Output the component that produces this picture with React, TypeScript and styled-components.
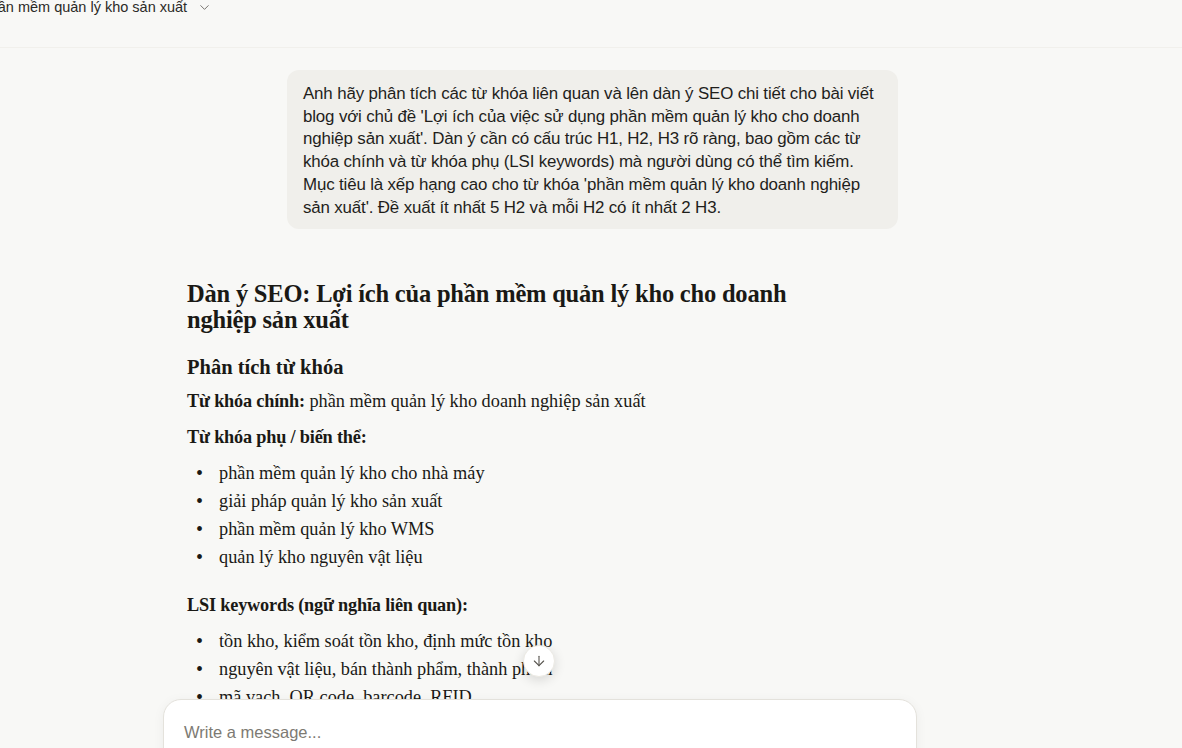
import React, { FC } from 'react';
import styled, { createGlobalStyle } from 'styled-components';
import { ChevronDown, ArrowDown } from 'lucide-react';

const GlobalStyle = createGlobalStyle`
  html, body {
    margin: 0;
    padding: 0;
    height: 100%;
    background: #f8f8f6;
    overflow: hidden;
  }
  #root {
    height: 100%;
  }
  *, *::before, *::after {
    box-sizing: border-box;
  }
`;

const Page = styled.div`
  position: relative;
  height: 748px;
  display: flex;
  flex-direction: column;
  background: #f8f8f6;
  overflow: hidden;
`;

const Header = styled.header`
  height: 48px;
  flex: 0 0 48px;
  display: flex;
  align-items: flex-start;
  border-bottom: 1px solid #f1f0ec;
  overflow: hidden;
`;

const TitleButton = styled.button`
  display: flex;
  align-items: center;
  gap: 10px;
  margin-left: -20px;
  margin-top: -1px;
  padding: 0;
  border: none;
  background: none;
  font-family: 'Liberation Sans', Arial, sans-serif;
  font-size: 14.5px;
  color: #2b2a27;
  white-space: nowrap;
  svg {
    color: #6f6c66;
  }
`;

const Scroller = styled.main`
  flex: 1;
  overflow: hidden;
  padding-right: 102px;
`;

const Column = styled.div`
  width: 754px;
  margin-left: 163px;
  display: flex;
  flex-direction: column;
`;

const UserRow = styled.div`
  display: flex;
  justify-content: flex-end;
  padding: 22px 19px 0 0;
`;

const Bubble = styled.div`
  width: 611px;
  background: #f0efeb;
  border-radius: 12px;
  padding: 13px 16px 10px 16px;
  font-family: 'Liberation Sans', Arial, sans-serif;
  font-size: 16.9px;
  line-height: 22.7px;
  color: #1f1e1b;
  letter-spacing: -0.15px;
`;

const Answer = styled.article`
  padding: 52px 24px 0 24px;
  font-family: 'Liberation Serif', 'Times New Roman', serif;
  color: #1a1915;
`;

const H1 = styled.h1`
  margin: 0 0 20px;
  width: 660px;
  font-size: 24.5px;
  line-height: 26px;
  font-weight: 700;
  letter-spacing: -0.2px;
`;

const H2 = styled.h2`
  margin: 0 0 6px;
  font-size: 20.5px;
  line-height: 28px;
  font-weight: 700;
`;

const Para = styled.p`
  margin: 0 0 8px;
  font-size: 18.3px;
  line-height: 28px;
  strong {
    font-weight: 700;
    letter-spacing: -0.2px;
  }
`;

const List = styled.ul<{ $gap?: number }>`
  margin: 0 0 ${({ $gap }) => $gap ?? 20}px;
  padding: 0;
  list-style: none;
  font-size: 18.3px;
  line-height: 28px;
`;

const Item = styled.li`
  display: flex;
  &::before {
    content: '•';
    flex: 0 0 32px;
    padding-left: 9px;
    font-size: 20px;
  }
`;

const ScrollDown = styled.button`
  position: absolute;
  left: 523px;
  top: 645px;
  width: 32px;
  height: 32px;
  border-radius: 50%;
  border: 1px solid #eceae4;
  background: #ffffff;
  box-shadow: 0 3px 12px rgba(0, 0, 0, 0.14);
  display: flex;
  align-items: center;
  justify-content: center;
  padding: 0;
  color: #55524c;
`;

const Composer = styled.div`
  position: absolute;
  left: 163px;
  top: 699px;
  width: 754px;
  height: 110px;
  background: #ffffff;
  border: 1px solid #e4e2dc;
  border-radius: 18px;
  box-shadow: 0 2px 12px rgba(0, 0, 0, 0.05);
  padding: 20px 20px;
`;

const Placeholder = styled.div`
  font-family: 'Liberation Sans', Arial, sans-serif;
  font-size: 16.5px;
  line-height: 24px;
  color: #7d7a73;
`;

const keywords = [
  'phần mềm quản lý kho cho nhà máy',
  'giải pháp quản lý kho sản xuất',
  'phần mềm quản lý kho WMS',
  'quản lý kho nguyên vật liệu',
];

const lsi = [
  'tồn kho, kiểm soát tồn kho, định mức tồn kho',
  'nguyên vật liệu, bán thành phẩm, thành phẩm',
  'mã vạch, QR code, barcode, RFID',
  'nhập xuất tồn, xuất nhập kho',
];

const App: FC = () => {
  return (
    <>
      <GlobalStyle />
      <Page>
        <Header>
          <TitleButton>
            Phần mềm quản lý kho sản xuất
            <ChevronDown size={15} strokeWidth={1.5} />
          </TitleButton>
        </Header>
        <Scroller>
          <Column>
            <UserRow>
              <Bubble>
                Anh hãy phân tích các từ khóa liên quan và lên dàn ý SEO chi tiết cho bài viết blog với chủ đề 'Lợi ích của việc sử dụng phần mềm quản lý kho cho doanh nghiệp sản xuất'. Dàn ý cần có cấu trúc H1, H2, H3 rõ ràng, bao gồm các từ khóa chính và từ khóa phụ (LSI keywords) mà người dùng có thể tìm kiếm. Mục tiêu là xếp hạng cao cho từ khóa 'phần mềm quản lý kho doanh nghiệp sản xuất'. Đề xuất ít nhất 5 H2 và mỗi H2 có ít nhất 2 H3.
              </Bubble>
            </UserRow>
            <Answer>
              <H1>Dàn ý SEO: Lợi ích của phần mềm quản lý kho cho doanh nghiệp sản xuất</H1>
              <H2>Phân tích từ khóa</H2>
              <Para>
                <strong>Từ khóa chính:</strong> phần mềm quản lý kho doanh nghiệp sản xuất
              </Para>
              <Para>
                <strong>Từ khóa phụ / biến thể:</strong>
              </Para>
              <List>
                {keywords.map((k) => (
                  <Item key={k}>{k}</Item>
                ))}
              </List>
              <Para>
                <strong>LSI keywords (ngữ nghĩa liên quan):</strong>
              </Para>
              <List>
                {lsi.map((k) => (
                  <Item key={k}>{k}</Item>
                ))}
              </List>
            </Answer>
          </Column>
        </Scroller>
        <ScrollDown aria-label="Scroll to bottom">
          <ArrowDown size={16} strokeWidth={1.6} />
        </ScrollDown>
        <Composer>
          <Placeholder>Write a message...</Placeholder>
        </Composer>
      </Page>
    </>
  );
};

export default App;
